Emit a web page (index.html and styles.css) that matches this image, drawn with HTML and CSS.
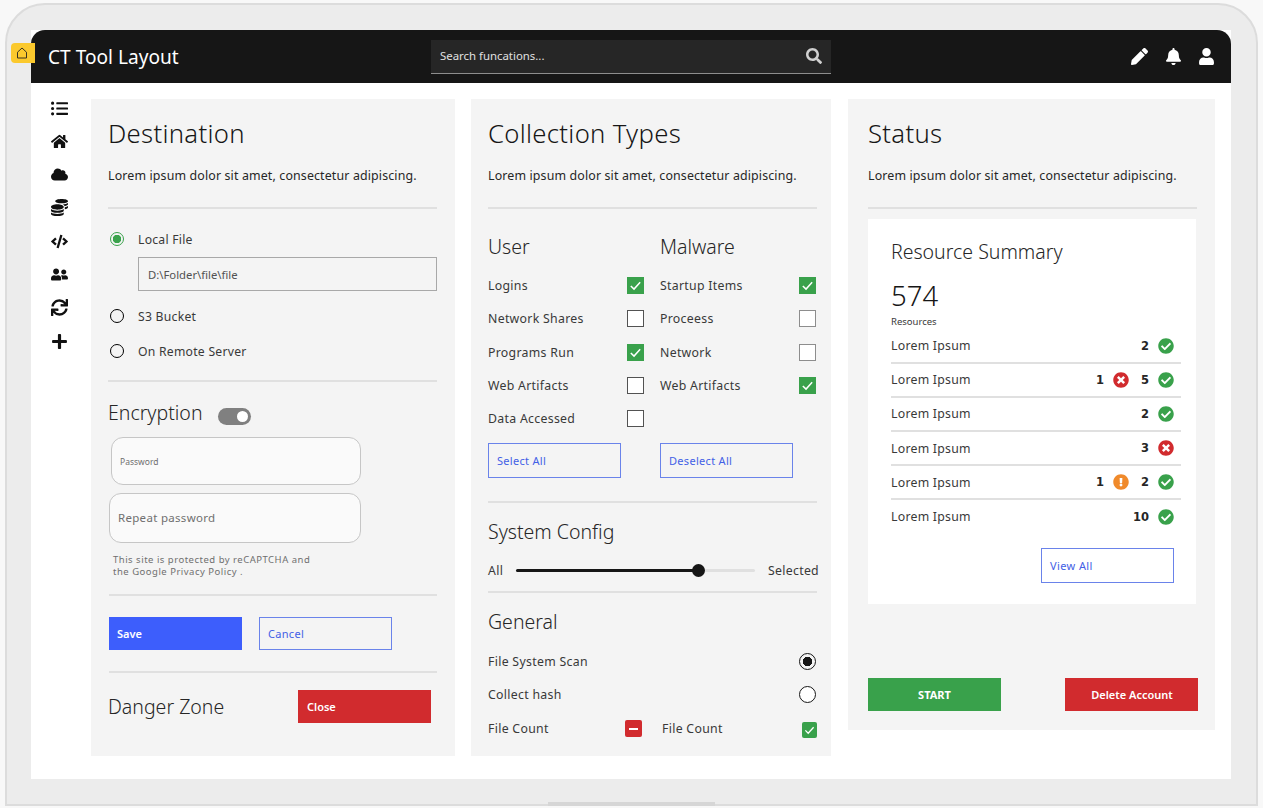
FILE: index.html
```html
<!DOCTYPE html>
<html lang="en">
<head>
    <meta charset="UTF-8">
    <meta name="viewport" content="width=device-width, initial-scale=1.0">
    <title>CT Tool Layout</title>
    <link rel="stylesheet" href="styles.css">
</head>
<body>
    <svg class="sprite" xmlns="http://www.w3.org/2000/svg">
        <symbol id="i-search" viewBox="0 0 512 512"><path d="M505 442.7L405.3 343c-4.5-4.5-10.6-7-17-7H372c27.6-35.3 44-79.7 44-128C416 93.1 322.9 0 208 0S0 93.1 0 208s93.1 208 208 208c48.3 0 92.7-16.4 128-44v16.3c0 6.4 2.5 12.5 7 17l99.7 99.7c9.4 9.4 24.6 9.4 33.9 0l28.3-28.3c9.4-9.4 9.4-24.6.1-34zM208 336c-70.7 0-128-57.2-128-128 0-70.7 57.2-128 128-128 70.7 0 128 57.2 128 128 0 70.7-57.2 128-128 128z"/></symbol>
        <symbol id="i-pencil" viewBox="0 0 512 512"><path d="M497.9 142.1l-46.1 46.1c-4.7 4.7-12.3 4.7-17 0l-111-111c-4.7-4.7-4.7-12.3 0-17l46.1-46.1c18.7-18.7 49.1-18.7 67.9 0l60.1 60.1c18.8 18.7 18.8 49.1 0 67.9zM284.2 99.8L21.6 362.4.4 483.9c-2.9 16.4 11.4 30.6 27.8 27.8l121.5-21.3 262.6-262.6c4.7-4.7 4.7-12.3 0-17l-111-111c-4.8-4.7-12.4-4.7-17.1 0z"/></symbol>
        <symbol id="i-bell" viewBox="0 0 448 512"><path d="M224 512c35.32 0 63.97-28.65 63.97-64H160.03c0 35.35 28.65 64 63.97 64zm215.39-149.71c-19.32-20.76-55.47-51.99-55.47-154.29 0-77.7-54.48-139.9-127.94-155.16V32c0-17.67-14.32-32-31.98-32s-31.98 14.33-31.98 32v20.84C118.56 68.1 64.08 130.3 64.08 208c0 102.3-36.15 133.53-55.47 154.29-6 6.45-8.66 14.16-8.61 21.71.11 16.4 12.98 32 32.1 32h383.8c19.12 0 32-15.6 32.1-32 .05-7.55-2.61-15.27-8.61-21.71z"/></symbol>
        <symbol id="i-user" viewBox="0 0 448 512"><path d="M224 256c70.7 0 128-57.3 128-128S294.7 0 224 0 96 57.3 96 128s57.3 128 128 128zm89.6 32h-16.7c-22.2 10.2-46.9 16-72.9 16s-50.6-5.8-72.9-16h-16.7C60.2 288 0 348.2 0 422.4V464c0 26.5 21.5 48 48 48h352c26.5 0 48-21.5 48-48v-41.6c0-74.2-60.2-134.4-134.4-134.4z"/></symbol>
        <symbol id="i-list" viewBox="0 0 512 512"><path d="M48 48a48 48 0 1 0 48 48 48 48 0 0 0-48-48zm0 160a48 48 0 1 0 48 48 48 48 0 0 0-48-48zm0 160a48 48 0 1 0 48 48 48 48 0 0 0-48-48zm448 16H176a16 16 0 0 0-16 16v32a16 16 0 0 0 16 16h320a16 16 0 0 0 16-16v-32a16 16 0 0 0-16-16zm0-320H176a16 16 0 0 0-16 16v32a16 16 0 0 0 16 16h320a16 16 0 0 0 16-16V80a16 16 0 0 0-16-16zm0 160H176a16 16 0 0 0-16 16v32a16 16 0 0 0 16 16h320a16 16 0 0 0 16-16v-32a16 16 0 0 0-16-16z"/></symbol>
        <symbol id="i-home" viewBox="0 0 576 512"><path d="M280.37 148.26L96 300.11V464a16 16 0 0 0 16 16l112.06-.29a16 16 0 0 0 15.92-16V368a16 16 0 0 1 16-16h64a16 16 0 0 1 16 16v95.64a16 16 0 0 0 16 16.05L464 480a16 16 0 0 0 16-16V300L295.67 148.26a12.19 12.19 0 0 0-15.3 0zM571.6 251.47L488 182.56V44.05a12 12 0 0 0-12-12h-56a12 12 0 0 0-12 12v72.61L318.47 43a48 48 0 0 0-61 0L4.34 251.47a12 12 0 0 0-1.6 16.9l25.5 31A12 12 0 0 0 45.15 301l235.22-193.74a12.19 12.19 0 0 1 15.3 0L530.9 301a12 12 0 0 0 16.9-1.6l25.5-31a12 12 0 0 0-1.7-16.93z"/></symbol>
        <symbol id="i-cloud" viewBox="0 0 640 512"><path d="M537.6 226.6c4.1-10.7 6.4-22.4 6.4-34.6 0-53-43-96-96-96-19.7 0-38.1 6-53.3 16.2C367 64.2 315.3 32 256 32c-88.4 0-160 71.6-160 160 0 2.7.1 5.4.2 8.1C40.2 219.8 0 273.2 0 336c0 79.5 64.5 144 144 144h368c70.7 0 128-57.3 128-128 0-61.9-44-113.6-102.4-125.4z"/></symbol>
        <symbol id="i-coins" viewBox="0 0 512 512"><path d="M0 405.3V448c0 35.3 86 64 192 64s192-28.7 192-64v-42.7C342.7 434.4 267.2 448 192 448S41.3 434.4 0 405.3zM320 128c106 0 192-28.7 192-64S426 0 320 0 128 28.7 128 64s86 64 192 64zM0 300.4V352c0 35.3 86 64 192 64s192-28.7 192-64v-51.6c-41.3 34-116.9 51.6-192 51.6S41.3 334.4 0 300.4zm416 11c57.3-11.1 96-31.7 96-55.4v-42.7c-23.2 16.4-57.3 27.6-96 34.5v63.6zM192 160C86 160 0 195.8 0 240s86 80 192 80 192-35.8 192-80-86-80-192-80zm219.3 56.3c60-10.8 100.7-32 100.7-56.3v-42.7c-35.5 25.1-96.5 38.6-160.7 41.8 29.5 14.3 51.2 33.5 60 57.2z"/></symbol>
        <symbol id="i-code" viewBox="0 0 640 512"><path d="M278.9 511.5l-61-17.7c-6.4-1.8-10-8.5-8.2-14.9L346.2 8.7c1.8-6.4 8.5-10 14.9-8.2l61 17.7c6.4 1.8 10 8.5 8.2 14.9L293.8 503.3c-1.9 6.4-8.5 10.1-14.9 8.2zm-114-112.2l43.5-46.4c4.6-4.9 4.3-12.7-.8-17.2L117 256l90.6-79.7c5.1-4.5 5.5-12.3.8-17.2l-43.5-46.4c-4.5-4.8-12.1-5.1-17-.5L3.8 247.2c-5.1 4.7-5.1 12.8 0 17.5l144.1 135.1c4.9 4.6 12.5 4.4 17-.5zm327.2.6l144.1-135.1c5.1-4.7 5.1-12.8 0-17.5L492.1 112.1c-4.8-4.5-12.4-4.3-17 .5L431.6 159c-4.6 4.9-4.3 12.7.8 17.2L523 256l-90.6 79.7c-5.1 4.5-5.5 12.3-.8 17.2l43.5 46.4c4.5 4.9 12.1 5.1 17 .6z"/></symbol>
        <symbol id="i-users" viewBox="0 0 640 512"><path d="M192 256c61.9 0 112-50.1 112-112S253.9 32 192 32 80 82.1 80 144s50.1 112 112 112zm76.8 32h-8.3c-20.8 10-43.9 16-68.5 16s-47.6-6-68.5-16h-8.3C51.6 288 0 339.6 0 403.2V432c0 26.5 21.5 48 48 48h288c26.5 0 48-21.5 48-48v-28.8c0-63.6-51.6-115.2-115.2-115.2zM480 256c53 0 96-43 96-96s-43-96-96-96-96 43-96 96 43 96 96 96zm48 32h-3.8c-13.9 4.8-28.6 8-44.2 8s-30.3-3.2-44.2-8H432c-20.4 0-39.2 5.9-55.7 15.4 24.4 26.3 39.7 61.2 39.7 99.8v38.4c0 2.2-.5 4.3-.6 6.4H592c26.5 0 48-21.5 48-48 0-61.9-50.1-112-112-112z"/></symbol>
        <symbol id="i-sync" viewBox="0 0 512 512"><path d="M440.65 12.57l4 82.77A247.16 247.16 0 0 0 255.83 8C134.73 8 33.91 94.92 12.29 209.82A12 12 0 0 0 24.09 224h49.05a12 12 0 0 0 11.67-9.26 175.91 175.91 0 0 1 317-56.94l-101.46-4.86a12 12 0 0 0-12.57 12v47.41a12 12 0 0 0 12 12H500a12 12 0 0 0 12-12V12a12 12 0 0 0-12-12h-47.37a12 12 0 0 0-11.98 12.57zM255.83 432a175.61 175.61 0 0 1-146-77.8l101.8 4.87a12 12 0 0 0 12.57-12v-47.4a12 12 0 0 0-12-12H12a12 12 0 0 0-12 12V500a12 12 0 0 0 12 12h47.35a12 12 0 0 0 12-12.6l-4.15-82.57A247.17 247.17 0 0 0 255.83 504c121.11 0 221.93-86.92 243.55-201.82a12 12 0 0 0-11.8-14.18h-49.05a12 12 0 0 0-11.67 9.26A175.86 175.86 0 0 1 255.83 432z"/></symbol>
        <symbol id="i-plus" viewBox="0 0 448 512"><path d="M416 208H272V64c0-17.67-14.33-32-32-32h-32c-17.67 0-32 14.33-32 32v144H32c-17.67 0-32 14.33-32 32v32c0 17.67 14.33 32 32 32h144v144c0 17.67 14.33 32 32 32h32c17.67 0 32-14.33 32-32V304h144c17.67 0 32-14.33 32-32v-32c0-17.67-14.33-32-32-32z"/></symbol>
        <symbol id="i-ok" viewBox="0 0 512 512"><path d="M504 256c0 136.967-111.033 248-248 248S8 392.967 8 256 119.033 8 256 8s248 111.033 248 248zM227.314 387.314l184-184c6.248-6.248 6.248-16.379 0-22.627l-22.627-22.627c-6.248-6.249-16.379-6.249-22.628 0L216 308.118l-70.059-70.059c-6.248-6.248-16.379-6.248-22.628 0l-22.627 22.627c-6.248 6.248-6.248 16.379 0 22.627l104 104c6.249 6.249 16.379 6.249 22.628.001z"/></symbol>
        <symbol id="i-bad" viewBox="0 0 512 512"><path d="M256 8C119 8 8 119 8 256s111 248 248 248 248-111 248-248S393 8 256 8zm121.6 313.1c4.7 4.7 4.7 12.3 0 17L338 377.6c-4.7 4.7-12.3 4.7-17 0L256 312l-65.1 65.6c-4.7 4.7-12.3 4.7-17 0L134.4 338c-4.7-4.7-4.7-12.3 0-17l65.6-65-65.6-65.1c-4.7-4.7-4.7-12.3 0-17l39.6-39.6c4.7-4.7 12.3-4.7 17 0l65 65.7 65.1-65.6c4.7-4.7 12.3-4.7 17 0l39.6 39.6c4.7 4.7 4.7 12.3 0 17L312 256l65.6 65.1z"/></symbol>
        <symbol id="i-warn" viewBox="0 0 512 512"><path d="M504 256c0 136.997-111.043 248-248 248S8 392.997 8 256C8 119.083 119.043 8 256 8s248 111.083 248 248zm-248 50c-25.405 0-46 20.595-46 46s20.595 46 46 46 46-20.595 46-46-20.595-46-46-46zm-43.673-165.346l7.418 136c.347 6.364 5.609 11.346 11.982 11.346h48.546c6.373 0 11.635-4.982 11.982-11.346l7.418-136c.375-6.874-5.098-12.654-11.982-12.654h-63.383c-6.884 0-12.356 5.78-11.981 12.654z"/></symbol>
        <symbol id="i-tick" viewBox="0 0 16 16"><path d="M3.6 8.4l3 3 5.8-6.4" fill="none" stroke="#fff" stroke-width="1.4"/></symbol>
    </svg>

    <div class="laptop">
        <div class="tag">
            <svg viewBox="0 0 14 14"><path d="M2.5 12V6.2L7 2l4.5 4.2V12z" fill="none" stroke="#3a3320" stroke-width="1"/></svg>
        </div>
        <div class="notch"></div>

        <div class="screen">
            <header class="topbar">
                <div class="brand">CT Tool Layout</div>
                <div class="search">
                    <span>Search funcations...</span>
                    <svg class="search-icon"><use href="#i-search"/></svg>
                </div>
                <div class="top-icons">
                    <svg><use href="#i-pencil"/></svg>
                    <svg><use href="#i-bell"/></svg>
                    <svg><use href="#i-user"/></svg>
                </div>
            </header>

            <div class="main">
                <nav class="sidebar">
                    <svg><use href="#i-list"/></svg>
                    <svg><use href="#i-home"/></svg>
                    <svg><use href="#i-cloud"/></svg>
                    <svg><use href="#i-coins"/></svg>
                    <svg><use href="#i-code"/></svg>
                    <svg><use href="#i-users"/></svg>
                    <svg><use href="#i-sync"/></svg>
                    <svg><use href="#i-plus"/></svg>
                </nav>

                <section class="panel panel-dest">
                    <h1>Destination</h1>
                    <p class="desc">Lorem ipsum dolor sit amet, consectetur adipiscing.</p>
                    <hr class="rule rule-first">

                    <div class="radio-row radio-row-first"><span class="radio radio-green"></span>Local File</div>
                    <input class="path-input" type="text" value="D:\Folder\file\file">
                    <div class="radio-row"><span class="radio"></span>S3 Bucket</div>
                    <div class="radio-row"><span class="radio"></span>On Remote Server</div>
                    <hr class="rule rule-enc">

                    <div class="enc-row">
                        <h2>Encryption</h2>
                        <span class="toggle"><span class="toggle-knob"></span></span>
                    </div>
                    <input class="pass-input pass-small" type="text" placeholder="Password">
                    <input class="pass-input pass-big" type="text" placeholder="Repeat password">
                    <p class="recaptcha">This site is protected by reCAPTCHA and<br>the Google Privacy Policy .</p>
                    <hr class="rule rule-save">

                    <div class="btn-row btn-row-save">
                        <button class="btn btn-blue" type="button">Save</button>
                        <button class="btn btn-outline" type="button">Cancel</button>
                    </div>
                    <hr class="rule rule-danger">

                    <div class="danger-row">
                        <h2>Danger Zone</h2>
                        <button class="btn btn-red" type="button">Close</button>
                    </div>
                </section>

                <section class="panel panel-types">
                    <h1>Collection Types</h1>
                    <p class="desc">Lorem ipsum dolor sit amet, consectetur adipiscing.</p>
                    <hr class="rule rule-first">

                    <div class="types-grid">
                        <div class="types-col">
                            <h2 class="col-title">User</h2>
                            <div class="check-row">Logins<span class="check check-on"><svg><use href="#i-tick"/></svg></span></div>
                            <div class="check-row">Network Shares<span class="check"></span></div>
                            <div class="check-row">Programs Run<span class="check check-on"><svg><use href="#i-tick"/></svg></span></div>
                            <div class="check-row">Web Artifacts<span class="check"></span></div>
                            <div class="check-row">Data Accessed<span class="check"></span></div>
                            <button class="btn btn-outline btn-select" type="button">Select All</button>
                        </div>
                        <div class="types-col types-col-right">
                            <h2 class="col-title">Malware</h2>
                            <div class="check-row">Startup Items<span class="check check-on"><svg><use href="#i-tick"/></svg></span></div>
                            <div class="check-row">Proceess<span class="check"></span></div>
                            <div class="check-row">Network<span class="check"></span></div>
                            <div class="check-row">Web Artifacts<span class="check check-on"><svg><use href="#i-tick"/></svg></span></div>
                            <div class="check-row check-row-empty"></div>
                            <button class="btn btn-outline btn-select" type="button">Deselect All</button>
                        </div>
                    </div>
                    <hr class="rule rule-config">

                    <h2 class="section-title">System Config</h2>
                    <div class="slider-row">
                        <span>All</span>
                        <div class="slider"><div class="slider-fill"></div><div class="slider-thumb"></div></div>
                        <span>Selected</span>
                    </div>
                    <hr class="rule rule-general">

                    <h2 class="section-title section-general">General</h2>
                    <div class="general-row general-first">File System Scan<span class="radio-big radio-big-on"></span></div>
                    <div class="general-row">Collect hash<span class="radio-big"></span></div>
                    <div class="count-row">
                        <span class="count-label">File Count</span>
                        <span class="mini mini-red"></span>
                        <span class="count-label count-second">File Count</span>
                        <span class="mini mini-green"><svg><use href="#i-tick"/></svg></span>
                    </div>
                </section>

                <section class="panel panel-status">
                    <h1>Status</h1>
                    <p class="desc">Lorem ipsum dolor sit amet, consectetur adipiscing.</p>
                    <hr class="rule rule-first">

                    <div class="summary">
                        <h2>Resource Summary</h2>
                        <div class="big-num">574</div>
                        <div class="big-label">Resources</div>

                        <div class="res-row">
                            <span class="res-name">Lorem Ipsum</span>
                            <span class="num">2</span><svg class="st st-ok"><use href="#i-ok"/></svg>
                        </div>
                        <div class="res-row">
                            <span class="res-name">Lorem Ipsum</span>
                            <span class="num">1</span><svg class="st st-bad"><use href="#i-bad"/></svg>
                            <span class="num">5</span><svg class="st st-ok"><use href="#i-ok"/></svg>
                        </div>
                        <div class="res-row">
                            <span class="res-name">Lorem Ipsum</span>
                            <span class="num">2</span><svg class="st st-ok"><use href="#i-ok"/></svg>
                        </div>
                        <div class="res-row">
                            <span class="res-name">Lorem Ipsum</span>
                            <span class="num">3</span><svg class="st st-bad"><use href="#i-bad"/></svg>
                        </div>
                        <div class="res-row">
                            <span class="res-name">Lorem Ipsum</span>
                            <span class="num">1</span><svg class="st st-warn"><use href="#i-warn"/></svg>
                            <span class="num">2</span><svg class="st st-ok"><use href="#i-ok"/></svg>
                        </div>
                        <div class="res-row res-row-last">
                            <span class="res-name">Lorem Ipsum</span>
                            <span class="num">10</span><svg class="st st-ok"><use href="#i-ok"/></svg>
                        </div>

                        <button class="btn btn-outline btn-view" type="button">View All</button>
                    </div>

                    <div class="status-actions">
                        <button class="btn btn-green" type="button">START</button>
                        <button class="btn btn-red btn-center" type="button">Delete Account</button>
                    </div>
                </section>
            </div>
        </div>
    </div>
</body>
</html>
```

FILE: styles.css
```css
* {
    box-sizing: border-box;
}
html, body {
    margin: 0;
    height: 808px;
    overflow: hidden;
}
body {
    padding: 3px 5px 0;
    background-color: #f8f8f8;
    font-family: "Noto Sans", sans-serif;
    color: #262626;
}
h1, h2, p {
    margin: 0;
    font-weight: 400;
}
.sprite {
    display: none;
}

/* frame round the screen */
.laptop {
    position: relative;
    height: 803px;
    padding: 25px 25px 25px 24px;
    background-color: #ececec;
    border: 2px solid #dcdcdc;
    border-radius: 40px 40px 0 0;
}
.tag {
    position: absolute;
    left: 4px;
    top: 38px;
    width: 24px;
    height: 20px;
    padding: 3px 0 0 4px;
    background-color: #fbc92d;
    border-radius: 4px 0 0 4px;
}
.tag svg {
    display: block;
    width: 14px;
    height: 14px;
}
.notch {
    position: absolute;
    left: 541px;
    bottom: -2px;
    width: 167px;
    height: 4px;
    background-color: #d6d6d6;
}
.screen {
    height: 749px;
    background-color: #fff;
}

/* top bar */
.topbar {
    display: flex;
    align-items: center;
    height: 53px;
    padding: 0 16px 0 17px;
    background-color: #161616;
    border-radius: 14px 14px 0 0;
    color: #fff;
}
.brand {
    width: 383px;
    font-size: 19.1px;
}
.search {
    display: flex;
    align-items: center;
    justify-content: space-between;
    width: 400px;
    height: 34px;
    padding: 0 9px;
    background-color: #262626;
    border-bottom: 1px solid #8d8d8d;
    font-size: 11.4px;
    color: #e0e0e0;
}
.search span {
    margin-bottom: 2px;
}
.search-icon {
    width: 16px;
    height: 16px;
    fill: #d0d0d0;
}
.top-icons {
    display: flex;
    align-items: center;
    gap: 16px;
    margin-left: auto;
}
.top-icons svg {
    width: 17px;
    height: 17px;
    fill: #fff;
}
.top-icons svg:first-child {
    margin-right: 1px;
}

/* main area */
.main {
    display: flex;
    align-items: flex-start;
    padding-top: 8px;
}
.sidebar {
    display: flex;
    flex-direction: column;
    align-items: center;
    width: 60px;
    padding-right: 4px;
}
.sidebar svg {
    width: 17px;
    height: 17px;
    margin: 8.5px 0 7.83px;
    fill: #111;
}
.panel {
    margin-top: 8px;
    margin-right: 16px;
    padding-top: 17px;
    background-color: #f4f4f4;
}
.panel-types {
    margin-right: 17px;
}
.panel h1 {
    font-size: 25.7px;
    font-weight: 300;
    line-height: 36px;
    letter-spacing: 0.3px;
    color: #161616;
}
.panel h2 {
    font-size: 19.5px;
    font-weight: 300;
    line-height: 30px;
    color: #262626;
}
.desc {
    margin-top: 14px;
    font-size: 12.4px;
    line-height: 20px;
    letter-spacing: 0.14px;
    color: #262626;
}
.rule {
    height: 2px;
    margin: 0;
    border: 0;
    background-color: #e0e0e0;
}
.rule-first {
    margin-top: 21px;
}

/* destination */
.panel-dest {
    width: 364px;
    height: 657px;
    padding-left: 17px;
    padding-right: 18px;
}
.radio-row {
    display: flex;
    align-items: center;
    gap: 14px;
    height: 20px;
    margin-top: 15px;
    padding-left: 2px;
    font-size: 12.2px;
    letter-spacing: 0.25px;
    color: #393939;
}
.radio-row-first {
    margin-top: 20px;
}
.radio {
    width: 14px;
    height: 14px;
    border: 1.5px solid #000;
    border-radius: 50%;
}
.radio-green {
    border-color: #3aa24c;
    background: radial-gradient(circle, #3aa24c 0 4px, transparent 4.5px);
}
.path-input {
    display: block;
    width: 299px;
    height: 34px;
    margin: 8px 0 0 30px;
    padding: 0 9px;
    background-color: #f4f4f4;
    border: 1px solid #a8a8a8;
    font-family: inherit;
    font-size: 11.3px;
    color: #525252;
}
.rule-enc {
    margin-top: 19px;
}
.enc-row {
    display: flex;
    align-items: center;
    gap: 15px;
    margin-top: 16px;
}
.toggle {
    display: block;
    width: 33px;
    height: 17px;
    margin-top: 6px;
    padding: 3px 0 0 19px;
    background-color: #808080;
    border-radius: 9px;
}
.toggle-knob {
    display: block;
    width: 11px;
    height: 11px;
    background-color: #fff;
    border-radius: 50%;
}
.pass-input {
    display: block;
    background-color: #fafafa;
    border: 1px solid #c6c6c6;
    border-radius: 12px;
    font-family: inherit;
}
.pass-input::placeholder {
    color: #6f6f6f;
    opacity: 1;
}
.pass-small {
    width: 250px;
    height: 48px;
    margin: 9px 0 0 3px;
    padding: 0 8px;
    font-size: 8.5px;
}
.pass-big {
    width: 252px;
    height: 50px;
    margin-top: 8px;
    margin-left: 1px;
    padding: 0 8px 2px;
    font-size: 11.5px;
    letter-spacing: 0.3px;
}
.recaptcha {
    margin: 11px 0 0 5px;
    font-size: 9.5px;
    line-height: 12px;
    letter-spacing: 0.5px;
    color: #6f6f6f;
}
.rule-save {
    margin-top: 16px;
    margin-left: 1px;
}
.btn-row {
    display: flex;
    gap: 17px;
}
.btn-row-save {
    margin-top: 21px;
    margin-left: 1px;
}
.rule-danger {
    margin-top: 21px;
    margin-left: 1px;
}
.danger-row {
    display: flex;
    align-items: center;
    justify-content: space-between;
    margin-top: 17px;
    margin-right: 6px;
}

/* buttons */
.btn {
    display: block;
    width: 133px;
    height: 33px;
    padding: 0 8px;
    border: 0;
    font-family: inherit;
    font-size: 11px;
    text-align: left;
}
.btn-blue {
    background-color: #3d5efc;
    color: #fff;
    font-weight: 600;
}
.btn-outline {
    background-color: transparent;
    border: 1px solid #6a83ea;
    color: #4360e6;
    letter-spacing: 0.3px;
}
.btn-red {
    padding-left: 9px;
    background-color: #d12b2e;
    color: #fff;
    font-weight: 600;
}
.btn-green {
    background-color: #39a14b;
    color: #fff;
    font-weight: 700;
    text-align: center;
}
.btn-center {
    text-align: center;
}
.btn-select {
    height: 35px;
    margin-top: 8px;
}

/* collection types */
.panel-types {
    width: 360px;
    height: 657px;
    padding-left: 17px;
    padding-right: 14px;
}
.types-grid {
    display: flex;
    gap: 16px;
    margin-top: 23px;
}
.types-col {
    width: 156px;
}
.col-title {
    margin-bottom: 7px;
}
.check-row {
    display: flex;
    align-items: center;
    justify-content: space-between;
    height: 33.3px;
    font-size: 12.3px;
    letter-spacing: 0.3px;
    color: #393939;
}
.check {
    width: 17px;
    height: 17px;
    background-color: #fff;
    border: 1px solid #525252;
}
.types-col-right .check {
    border: 1.5px solid #8d8d8d;
}
.types-col .check-on {
    background-color: #39a14b;
    border: 0;
}
.check svg {
    display: block;
    width: 17px;
    height: 17px;
}
.rule-config {
    margin-top: 23px;
}
.section-title {
    margin-top: 14px;
}
.slider-row {
    display: flex;
    align-items: center;
    justify-content: space-between;
    width: 331px;
    height: 20px;
    margin-top: 13px;
    font-size: 12.3px;
    letter-spacing: 0.3px;
    color: #393939;
}
.slider {
    position: relative;
    width: 239px;
    height: 3px;
    background-color: #e0e0e0;
    border-radius: 2px;
}
.slider-fill {
    width: 182px;
    height: 3px;
    background-color: #161616;
    border-radius: 2px;
}
.slider-thumb {
    position: absolute;
    left: 176px;
    top: -5px;
    width: 13px;
    height: 13px;
    background-color: #161616;
    border-radius: 50%;
}
.rule-general {
    margin-top: 11px;
}
.general-first {
    margin-top: 7px;
}
.general-row {
    display: flex;
    align-items: center;
    justify-content: space-between;
    width: 328px;
    height: 33.3px;
    font-size: 12.3px;
    letter-spacing: 0.3px;
    color: #393939;
}
.radio-big {
    width: 17px;
    height: 17px;
    background-color: #fff;
    border: 1px solid #161616;
    border-radius: 50%;
}
.radio-big-on {
    background: radial-gradient(circle, #161616 0 4.5px, transparent 5px), #f4f4f4;
}
.count-row {
    display: flex;
    align-items: center;
    height: 35px;
    font-size: 12.3px;
    letter-spacing: 0.3px;
    color: #393939;
}
.count-label {
    width: 137px;
}
.count-second {
    width: 140px;
    margin-left: 20px;
}
.mini {
    display: block;
    width: 17px;
    height: 17px;
    border-radius: 2px;
}
.mini-red {
    background: linear-gradient(#fff, #fff) center / 9px 2px no-repeat, #d12b2e;
}
.mini-green {
    width: 15px;
    height: 16px;
    margin-top: 2px;
    background-color: #39a14b;
}
.mini svg {
    display: block;
    width: 15px;
    height: 16px;
}

/* status */
.panel-status {
    width: 367px;
    height: 631px;
    margin-right: 0;
    padding-left: 20px;
    padding-right: 18px;
}
.summary {
    width: 328px;
    height: 385px;
    margin-top: 10px;
    padding: 18px 15px 0 23px;
    background-color: #fff;
}
.big-num {
    margin-top: 14px;
    font-size: 27.5px;
    font-weight: 300;
    line-height: 30px;
    color: #161616;
}
.big-label {
    margin: 5px 0 1.5px;
    font-size: 9.5px;
    line-height: 12px;
    color: #393939;
}
.res-row {
    display: flex;
    align-items: center;
    height: 34.2px;
    border-bottom: 2px solid #e0e0e0;
    font-size: 12.3px;
    letter-spacing: 0.25px;
    color: #393939;
}
.res-row-last {
    height: 33px;
    border-bottom: 0;
}
.res-name {
    margin-right: auto;
}
.num {
    margin-left: 5px;
    font-family: "DejaVu Sans", sans-serif;
    font-size: 11.5px;
    font-weight: 700;
    letter-spacing: 0;
    color: #262626;
}
.st {
    width: 16px;
    height: 16px;
    margin-left: 9px;
    margin-right: 7px;
}
.st-ok {
    fill: #39a14b;
}
.st-bad {
    fill: #d12b2e;
}
.st-warn {
    fill: #f08a2b;
}
.btn-view {
    margin: 14.5px 0 0 150px;
    height: 35px;
    letter-spacing: 0.4px;
}
.status-actions {
    display: flex;
    justify-content: space-between;
    width: 330px;
    margin-top: 74px;
}
```
